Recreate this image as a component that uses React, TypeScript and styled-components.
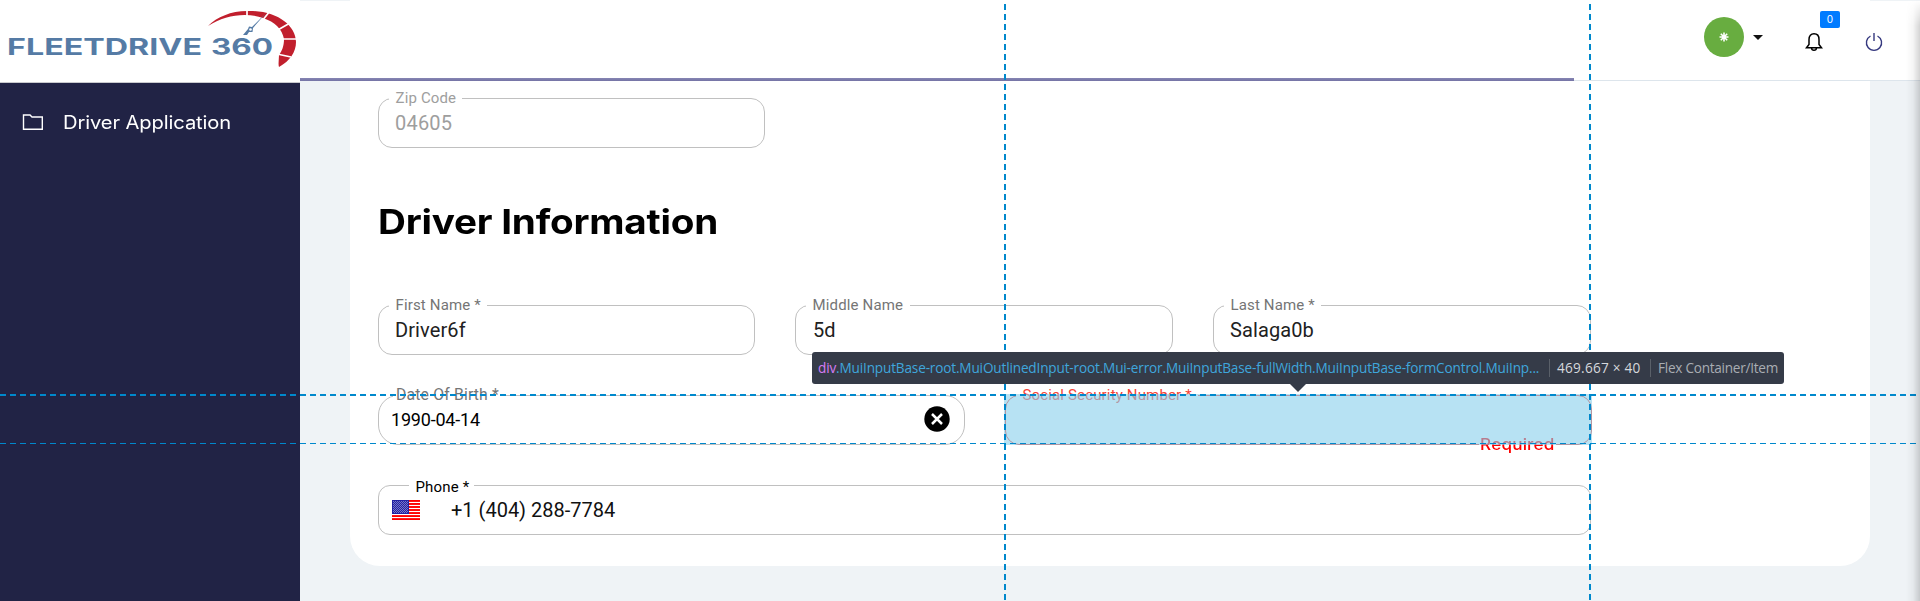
import React from "react";
import styled, { createGlobalStyle } from "styled-components";

const Global = createGlobalStyle`
  * { box-sizing: border-box; }
  body { margin: 0; overflow: hidden; font-family: Roboto, "Liberation Sans", sans-serif; }
`;

const Page = styled.div`
  position: relative;
  display: flex;
  width: 1920px;
  height: 601px;
  overflow: hidden;
  background: #eff3f6;
`;

const Sidebar = styled.aside`
  display: flex;
  flex-direction: column;
  flex: 0 0 300px;
  background: #212345;
`;

const Brand = styled.div`
  height: 83px;
  background: #fff;
  border-bottom: 1px solid #c9cace;
`;

const NavItem = styled.a`
  display: flex;
  align-items: center;
  gap: 20px;
  height: 44px;
  margin-top: 17px;
  padding-left: 22px;
  color: #fff;
  font: 400 18px/44px Inter, sans-serif;
  letter-spacing: -0.1px;
  white-space: nowrap;
`;

const NavText = styled.span`
  padding-top: 1px;
  transform: scaleX(1.12);
  transform-origin: left;
`;

const Main = styled.main`
  display: flex;
  flex-direction: column;
  flex: 1;
`;

const Header = styled.header`
  position: relative;
  display: flex;
  align-items: flex-start;
  justify-content: flex-end;
  height: 81px;
  padding: 17px 37px 0 0;
  background: #fff;
  border-bottom: 1px solid #dde5ec;
  box-shadow: inset 0 1px 0 #eff3f6;
`;

const HeaderEdge = styled.div`
  position: absolute;
  top: 0;
  left: 50px;
  width: 1520px;
  height: 1px;
  background: #fff;
`;

const Progress = styled.div`
  position: absolute;
  left: 0;
  top: 78px;
  width: 1274px;
  height: 3px;
  background: linear-gradient(#8786b3, #7473a5);
`;

const Avatar = styled.div`
  display: flex;
  align-items: center;
  justify-content: center;
  width: 40px;
  height: 40px;
  border-radius: 50%;
  background: #68ad40;
`;

const Caret = styled.div`
  width: 10px;
  margin: 18px 0 0 9px;
  border: 5px solid transparent;
  border-top-color: #111;
  border-bottom: 0;
`;

const BellButton = styled.div`
  position: relative;
  width: 18px;
  height: 20px;
  margin: 15px 0 0 42px;
`;

const Count = styled.span`
  position: absolute;
  left: 15px;
  top: -21px;
  width: 20px;
  height: 17px;
  border-radius: 2px;
  background: #007bff;
  color: #fff;
  font: 400 10px/17px Inter, sans-serif;
  text-align: center;
`;

const PowerButton = styled.div`
  width: 18px;
  height: 20px;
  margin: 15px 0 0 42px;
`;

const Card = styled.section`
  width: 1520px;
  height: 485px;
  margin-left: 50px;
  padding: 17px 28px 0;
  background: #fff;
  border-radius: 0 0 30px 30px;
`;

const Title = styled.h1`
  margin: 49px 0 0;
  height: 50px;
  color: #000;
  font: 700 34px/50px Inter, sans-serif;
  letter-spacing: -0.2px;
  white-space: nowrap;
  transform: scaleX(1.137);
  transform-origin: left;
`;

const Row = styled.div<{ $top: number }>`
  display: flex;
  margin-top: ${(p) => p.$top}px;
`;

const Field = styled.div<{ $w: number; $gap?: number; $radius?: number; $error?: boolean }>`
  position: relative;
  display: flex;
  align-items: center;
  flex: 0 0 ${(p) => p.$w}px;
  height: 50px;
  margin-left: ${(p) => p.$gap ?? 0}px;
  border: 1px solid ${(p) => (p.$error ? "#f44336" : "#c0c0c0")};
  border-radius: ${(p) => p.$radius ?? 14}px;
`;

const Label = styled.label<{ $left?: number; $top?: number; $w: number; $color?: string; $pad?: number; $size?: number }>`
  position: absolute;
  left: ${(p) => p.$left ?? 10}px;
  top: ${(p) => p.$top ?? -10}px;
  width: ${(p) => p.$w}px;
  padding-left: ${(p) => p.$pad ?? 6.5}px;
  background: #fff;
  color: ${(p) => p.$color ?? "#757575"};
  font-size: ${(p) => p.$size ?? 15}px;
  line-height: 18px;
  letter-spacing: 0.15px;
  white-space: nowrap;
`;

const Value = styled.span<{ $left?: number; $size?: number; $color?: string; $track?: number }>`
  padding-left: ${(p) => p.$left ?? 16}px;
  color: ${(p) => p.$color ?? "#212121"};
  font-size: ${(p) => p.$size ?? 20}px;
  line-height: 24px;
  letter-spacing: ${(p) => p.$track ?? 0.1}px;
  white-space: nowrap;
`;

const ClearButton = styled.div`
  width: 26px;
  height: 26px;
  margin: -2px 14px 0 auto;
`;

const Required = styled.span`
  position: absolute;
  left: 473px;
  top: 38px;
  padding: 0 1px;
  background: #fff;
  color: #f00;
  font: 500 15.6px/22px Inter, sans-serif;
  letter-spacing: 0.15px;
  transform: scaleX(1.1);
  transform-origin: left;
`;

const FlagBox = styled.div`
  width: 28px;
  height: 20px;
  margin-left: 13px;
`;

const Highlight = styled.div`
  position: absolute;
  left: 1004px;
  top: 394px;
  width: 588px;
  height: 51px;
  background: rgba(135, 206, 235, 0.6);
`;

const GuideX = styled.div<{ $y: number; $h: number }>`
  position: absolute;
  left: 0;
  top: ${(p) => p.$y}px;
  width: 1916px;
  height: ${(p) => p.$h}px;
  background: repeating-linear-gradient(90deg, #0088cc 0 6px, transparent 6px 10px);
`;

const GuideY = styled.div<{ $x: number }>`
  position: absolute;
  left: ${(p) => p.$x}px;
  top: 4px;
  width: 2px;
  height: 597px;
  background: repeating-linear-gradient(180deg, #0088cc 0 6px, transparent 6px 10px);
`;

const Tooltip = styled.div`
  position: absolute;
  left: 812px;
  top: 352px;
  display: flex;
  align-items: center;
  width: 972px;
  height: 32px;
  padding-left: 6px;
  border-radius: 3px;
  background: #353b48;
  font: 400 13.6px/32px "Open Sans", "Noto Sans", sans-serif;
  white-space: nowrap;
  &::after {
    content: "";
    position: absolute;
    left: 478px;
    top: 32px;
    border: 8px solid transparent;
    border-top-color: #353b48;
    border-bottom: 0;
  }
`;

const Selector = styled.span`
  width: 731px;
  color: #3fa6dc;
  letter-spacing: -0.16px;
  b { color: #d67bf5; font-weight: 400; }
`;

const Meta = styled.span<{ $w: number; $color: string; $track: number }>`
  width: ${(p) => p.$w}px;
  height: 18px;
  padding-left: 7px;
  border-left: 1px solid #5a6069;
  color: ${(p) => p.$color};
  line-height: 18px;
  letter-spacing: ${(p) => p.$track}px;
`;

const EdgeShadow = styled.div`
  position: absolute;
  right: 0;
  top: 0;
  width: 14px;
  height: 601px;
  background: linear-gradient(90deg, transparent, rgba(0, 0, 0, 0.04) 50%, rgba(0, 0, 0, 0.17));
  mask-image: linear-gradient(transparent, #000 26px);
`;

const Wordmark = styled.text`
  fill: #557ba5;
  font: 700 23px Inter, sans-serif;
`;

const Logo = () => (
  <svg width="300" height="82" viewBox="0 0 300 82">
    <Wordmark x="7" y="55" textLength="195" lengthAdjust="spacingAndGlyphs">FLEETDRIVE</Wordmark>
    <Wordmark x="211" y="55" textLength="62" lengthAdjust="spacingAndGlyphs">360</Wordmark>
    <path fill="#c11f2d" d="M208 26C217 17 231 11 247 11C276 10 296 25 296 42C296 52 290 61 279 67C278 64 279 59 279 55C282 51 284 46 284 39C282 29 275 22 263 18C246 12 225 15 208 26Z" />
    <path stroke="#fff" strokeWidth="1.7" fill="none" d="M247 9V18M262 21L270 11M276 31L290 23M281 39H297M277 54L291 57" />
    <path fill="#557ba5" d="M266 13L253 28L252.5 32L249 32L247 35H243L248 29L249 26.5L252 27Z" />
    <circle cx="250.5" cy="29.5" r="1.3" fill="#fff" />
  </svg>
);

const Flag = () => (
  <svg width="28" height="20" viewBox="0 0 28 20">
    <defs>
      <pattern id="stars" width="2" height="2" patternUnits="userSpaceOnUse">
        <rect width="2" height="2" fill="#2222a4" />
        <rect width="1" height="1" fill="#7777c6" />
        <rect x="1" y="1" width="1" height="1" fill="#7777c6" />
      </pattern>
    </defs>
    <rect width="28" height="20" fill="#fff" />
    {[0, 1, 2, 3, 4, 5, 6].map((i) => (
      <rect key={i} y={i * 3.02} width="28" height="1.9" fill="#f00" />
    ))}
    <rect width="17" height="14" fill="#2222a4" />
    <rect x="1" y="1" width="15" height="12" fill="url(#stars)" />
  </svg>
);

export default function App() {
  return (
    <Page>
      <Global />
      <Sidebar>
        <Brand><Logo /></Brand>
        <NavItem>
          <svg width="21" height="16" viewBox="0 0 21 16"><path d="M1.5 1H8L10 3H20.3V15.2H1.5Z" fill="none" stroke="#fff" strokeWidth="1.4" /></svg>
          <NavText>Driver Application</NavText>
        </NavItem>
      </Sidebar>
      <Main>
        <Header>
          <HeaderEdge />
          <Avatar>
            <svg width="10" height="10" viewBox="-5 -5 10 10"><path d="M0-4.5V4.5M-4.5 0H4.5M-3.2-3.2L3.2 3.2M-3.2 3.2L3.2-3.2" stroke="#fff" strokeWidth="1.6" /></svg>
          </Avatar>
          <Caret />
          <BellButton>
            <svg width="18" height="20" viewBox="0 0 18 20"><path d="M1.5 15.8L4 12.5V7.5C4 4 6 1.8 9 1.8S14 4 14 7.5V12.5L16.5 15.8ZM6.5 16C6.7 19 11.3 19 11.5 16" fill="none" stroke="#000" strokeWidth="1.5" /></svg>
            <Count>0</Count>
          </BellButton>
          <PowerButton>
            <svg width="18" height="20" viewBox="0 0 18 20"><path d="M9 1V9M5.5 4A7.6 7.6 0 1 0 12.5 4" fill="none" stroke="#36397f" strokeWidth="1.4" /></svg>
          </PowerButton>
          <Progress />
        </Header>
        <Card>
          <Row $top={0}>
            <Field $w={387}>
              <Label $w={73} $color="#9e9e9e">Zip Code</Label>
              <Value $color="#9e9e9e" $track={0.2}>04605</Value>
            </Field>
          </Row>
          <Title>Driver Information</Title>
          <Row $top={58}>
            <Field $w={377}><Label $w={98}>First Name *</Label><Value>Driver6f</Value></Field>
            <Field $w={378} $gap={40}><Label $w={104}>Middle Name</Label><Value $left={17}>5d</Value></Field>
            <Field $w={378} $gap={40}><Label $w={97}>Last Name *</Label><Value>Salaga0b</Value></Field>
          </Row>
          <Row $top={40}>
            <Field $w={587} $radius={20}>
              <Label $w={107} $left={14} $pad={3} $size={15.8}>Date Of Birth *</Label>
              <Value $left={12} $size={18} $color="#000" $track={-0.2}>1990-04-14</Value>
              <ClearButton>
                <svg width="26" height="26" viewBox="0 0 26 26"><circle cx="13" cy="13" r="12.7" /><path d="M8 8L18 18M18 8L8 18" stroke="#fff" strokeWidth="2.5" /></svg>
              </ClearButton>
            </Field>
            <Field $w={587} $gap={40} $error>
              <Label $w={182} $color="#f44336">Social Security Number *</Label>
              <Required>Required</Required>
            </Field>
          </Row>
          <Row $top={40}>
            <Field $w={1213} $radius={12}>
              <Label $w={65} $left={30} $color="#000" $top={-8}>Phone *</Label>
              <FlagBox><Flag /></FlagBox>
              <Value $left={31} $color="#111" $track={0}>+1 (404) 288-7784</Value>
            </Field>
          </Row>
        </Card>
      </Main>
      <Highlight />
      <GuideX $y={394} $h={2} />
      <GuideX $y={443} $h={1} />
      <GuideY $x={1004} />
      <GuideY $x={1589} />
      <Tooltip>
        <Selector><b>div</b>.MuiInputBase-root.MuiOutlinedInput-root.Mui-error.MuiInputBase-fullWidth.MuiInputBase-formControl.MuiInp...</Selector>
        <Meta $w={101} $color="#d5d8dc" $track={0.25}>469.667 × 40</Meta>
        <Meta $w={130} $color="#a9adb3" $track={-0.26}>Flex Container/Item</Meta>
      </Tooltip>
      <EdgeShadow />
    </Page>
  );
}
